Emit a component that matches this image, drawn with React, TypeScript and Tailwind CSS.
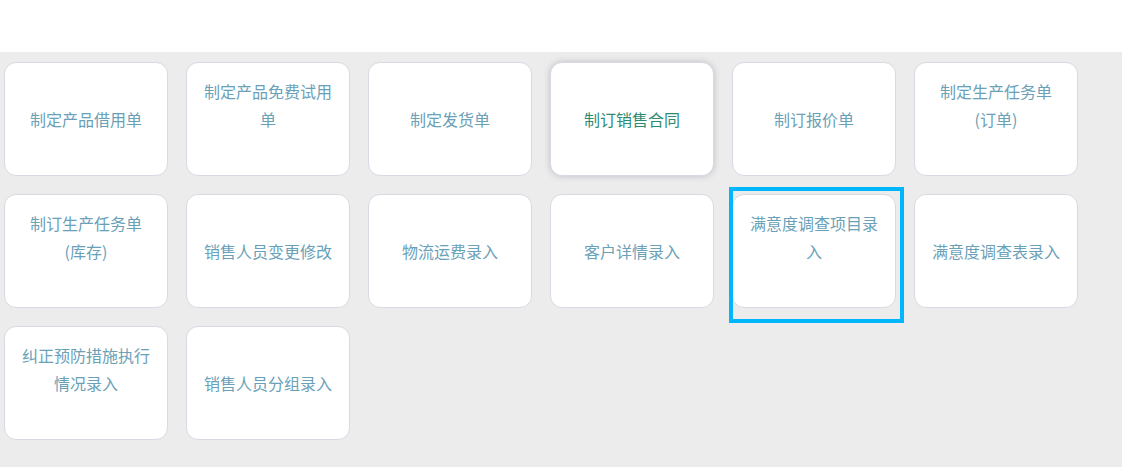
import React from "react";

type Item = {
  lines: string[];
  active?: boolean;
  selected?: boolean;
};

const items: Item[] = [
  { lines: ["制定产品借用单"] },
  { lines: ["制定产品免费试用", "单"] },
  { lines: ["制定发货单"] },
  { lines: ["制订销售合同"], active: true },
  { lines: ["制订报价单"] },
  { lines: ["制定生产任务单", "(订单)"] },
  { lines: ["制订生产任务单", "(库存)"] },
  { lines: ["销售人员变更修改"] },
  { lines: ["物流运费录入"] },
  { lines: ["客户详情录入"] },
  { lines: ["满意度调查项目录", "入"], selected: true },
  { lines: ["满意度调查表录入"] },
  { lines: ["纠正预防措施执行", "情况录入"] },
  { lines: ["销售人员分组录入"] },
];

const Card: React.FC<{ item: Item }> = ({ item }) => {
  const twoLines = item.lines.length > 1;
  return (
    <div className="relative w-[164px] h-[114px]">
      <div
        className={
          "w-full h-full bg-white rounded-[12px] border border-[#dcd7e3] flex flex-col items-center text-[16px] leading-[28px] " +
          (twoLines ? "pt-[14px] " : "pt-[42px] ") +
          (item.active
            ? "text-[#2e8b70] shadow-[0_0_6px_rgba(60,50,90,0.25)]"
            : "text-[#6aa1b8]")
        }
      >
        {item.lines.map((l, i) => (
          <span key={i} className="whitespace-nowrap">
            {l}
          </span>
        ))}
      </div>
      {/* focus outline */}
      {item.selected && (
        <div className="absolute left-[-3px] top-[-7px] w-[175px] h-[136px] border-4 border-[#00b6ff] pointer-events-none" />
      )}
    </div>
  );
};

export default function App() {
  return (
    <div
      className="w-full min-h-[467px] bg-[#ececec] flex flex-col"
      style={{ fontFamily: '"Noto Sans CJK SC", "Noto Sans", sans-serif' }}
    >
      <div className="h-[52px] bg-white" />
      <div className="pl-[4px] pt-[10px] grid grid-cols-[repeat(6,164px)] gap-x-[18px] gap-y-[18px]">
        {items.map((item, i) => (
          <Card key={i} item={item} />
        ))}
      </div>
    </div>
  );
}
